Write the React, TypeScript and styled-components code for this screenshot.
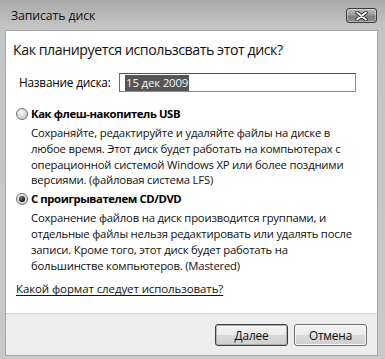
import React from "react";
import styled, { createGlobalStyle } from "styled-components";

const Global = createGlobalStyle`
  html, body { margin: 0; padding: 0; background: #c2c2c2; }
  body { font-family: "Open Sans", "Noto Sans", sans-serif; }
`;

const Window = styled.div`
  width: 385px;
  height: 359px;
  box-sizing: border-box;
  display: flex;
  flex-direction: column;
  background: linear-gradient(#a9a9a9 0px, #c4c4c4 26px, #c9c9c9 100%);
  padding: 0 8px 4px 6px;
`;

const TitleBar = styled.div`
  height: 31px;
  display: flex;
  align-items: center;
  justify-content: space-between;
  padding-left: 5px;
  padding-bottom: 1px;
  box-sizing: border-box;
`;

const Title = styled.span`
  font-size: 12.3px;
  color: #111;
  letter-spacing: -0.1px;
`;

const CloseButton = styled.div`
  width: 31px;
  height: 15px;
  box-sizing: border-box;
  border: 1px solid #3c3c3c;
  border-radius: 3px;
  background: linear-gradient(#bdbdbd 0%, #9c9c9c 45%, #7f7f7f 55%, #8e8e8e 100%);
  box-shadow: inset 0 0 0 1px rgba(255, 255, 255, 0.35);
  display: flex;
  align-items: center;
  justify-content: center;
  margin-top: 1px;
`;

const Panel = styled.div`
  flex: 1;
  display: flex;
  flex-direction: column;
  background: #fff;
  box-shadow: 0 0 0 1px #a8a8a8;
`;

const Content = styled.div`
  flex: 1;
  padding: 8px 7px 0 7px;
  color: #000;
  font-size: 11.3px;
  letter-spacing: -0.2px;
`;

const Heading = styled.div`
  font-size: 14.2px;
  line-height: 22px;
  letter-spacing: -0.45px;
  color: #111;
`;

const NameRow = styled.div`
  display: flex;
  align-items: center;
  margin-top: 12px;
  padding-left: 6px;
`;

const Label = styled.span`
  width: 100px;
  line-height: 19px;
  font-size: 11.8px;
`;

const Field = styled.div`
  width: 237px;
  height: 19px;
  box-sizing: border-box;
  border: 1px solid #8c8c8c;
  border-top-color: #4f4f4f;
  border-left-color: #6a6a6a;
  padding: 1px 0 0 5px;
  display: flex;
  align-items: flex-start;
`;

const Selected = styled.span`
  background: #555;
  color: #f4f4f4;
  line-height: 16px;
  padding: 0 1px;
  font-size: 11.5px;
`;

const Option = styled.div<{ $first?: boolean }>`
  display: grid;
  grid-template-columns: 15px 1fr;
  margin-top: ${(p) => (p.$first ? "14px" : "3px")};
  padding-left: 3px;
`;

const Radio = styled.span<{ $checked?: boolean }>`
  width: 12px;
  height: 12px;
  box-sizing: border-box;
  border-radius: 50%;
  border: 1px solid #6e6e6e;
  background: radial-gradient(circle at 40% 35%, #fafafa 0%, #d6d6d6 60%, #bdbdbd 100%);
  margin-top: 2px;
  display: flex;
  align-items: center;
  justify-content: center;
  &::after {
    content: "";
    display: ${(p) => (p.$checked ? "block" : "none")};
    width: 6px;
    height: 6px;
    border-radius: 50%;
    background: radial-gradient(circle at 40% 35%, #777 0%, #111 70%);
  }
`;

const OptionTitle = styled.div`
  font-weight: 700;
  line-height: 16px;
  letter-spacing: -0.4px;
`;

const OptionText = styled.div`
  grid-column: 2;
  margin-top: 3px;
  line-height: 15.8px;
  color: #111;
  white-space: nowrap;
`;

const HelpLink = styled.a`
  display: block;
  margin-top: 8px;
  line-height: 16px;
  color: #111;
  text-decoration: underline;
  text-underline-offset: 2px;
  padding-left: 3px;
  letter-spacing: -0.1px;
  font-size: 11.5px;
`;

const Footer = styled.div`
  height: 42px;
  box-sizing: border-box;
  border-top: 1px solid #d2d2d2;
  background: #ededed;
  display: flex;
  align-items: center;
  justify-content: flex-end;
  gap: 6px;
  padding: 0 10px 0 0;
`;

const Button = styled.div<{ $default?: boolean }>`
  width: 73px;
  height: 22px;
  box-sizing: border-box;
  border: 1px solid ${(p) => (p.$default ? "#3d3d3d" : "#6f6f6f")};
  border-radius: 3px;
  background: linear-gradient(#f4f4f4 0%, #ebebeb 48%, #d9d9d9 52%, #cfcfcf 100%);
  box-shadow: inset 0 0 0 1px ${(p) => (p.$default ? "#b0b0b0" : "#fbfbfb")};
  display: flex;
  align-items: center;
  justify-content: center;
  font-size: 11.8px;
  letter-spacing: -0.15px;
  color: #111;
`;

const CloseGlyph = () => (
  <svg width="13" height="10" viewBox="0 0 13 10">
    <path d="M2 1.5 L11 8.5 M11 1.5 L2 8.5" stroke="#2a2a2a" strokeWidth="3.6" strokeLinecap="round" />
    <path d="M2 1.5 L11 8.5 M11 1.5 L2 8.5" stroke="#fff" strokeWidth="1.8" strokeLinecap="round" />
  </svg>
);

export default function App() {
  return (
    <>
      <Global />
      <Window>
        <TitleBar>
          <Title>Записать диск</Title>
          <CloseButton>
            <CloseGlyph />
          </CloseButton>
        </TitleBar>
        <Panel>
          <Content>
            <Heading>Как планируется использсвать этот диск?</Heading>
            <NameRow>
              <Label>Название диска:</Label>
              <Field>
                <Selected>15 дек 2009</Selected>
              </Field>
            </NameRow>
            <Option $first>
              <Radio />
              <OptionTitle>Как флеш-накопитель USB</OptionTitle>
              <OptionText>
                Сохраняйте, редактируйте и удаляйте файлы на диске в<br />
                любое время. Этот диск будет работать на компьютерах с<br />
                операционной системой Windows XP или более поздними<br />
                версиями. (файловая система LFS)
              </OptionText>
            </Option>
            <Option>
              <Radio $checked />
              <OptionTitle>С проигрывателем CD/DVD</OptionTitle>
              <OptionText>
                Сохранение файлов на диск производится группами, и<br />
                отдельные файлы нельзя редактировать или удалять после<br />
                записи. Кроме того, этот диск будет работать на<br />
                большинстве компьютеров. (Mastered)
              </OptionText>
            </Option>
            <HelpLink>Какой формат следует использовать?</HelpLink>
          </Content>
          <Footer>
            <Button $default>Далее</Button>
            <Button>Отмена</Button>
          </Footer>
        </Panel>
      </Window>
    </>
  );
}
